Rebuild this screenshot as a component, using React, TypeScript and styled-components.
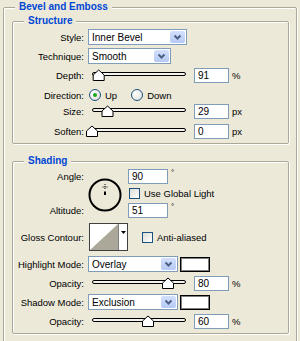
import styled, { createGlobalStyle } from "styled-components";

const GlobalStyle = createGlobalStyle`
  body {
    margin: 0;
    background: #ece9d8;
    font-family: "Liberation Sans", Arial, sans-serif;
    font-size: 9.5px;
    color: #000;
  }
`;

const Panel = styled.div`
  width: 300px;
  height: 341px;
  padding-top: 1px;
  box-sizing: border-box;
  overflow: hidden;
`;

const Group = styled.fieldset<{ $outer?: boolean; $mt?: number }>`
  margin: ${(p) => (p.$outer ? "0 3px" : `${p.$mt ?? 0}px 0 0 0`)};
  padding: ${(p) => (p.$outer ? "2px 7px 16px 8px" : "0 0 4px 0")};
  border: 1px solid #aca899;
  border-radius: 2px;
  box-shadow: 1px 1px 0 #fff, inset 1px 1px 0 #fff;
  min-width: 0;
`;

const Legend = styled.legend<{ $outer?: boolean }>`
  margin-left: ${(p) => (p.$outer ? 3 : 11)}px;
  padding: 0 4px;
  line-height: 12px;
  font-size: 10px;
  font-weight: bold;
  color: #0046d5;
  background: #ece9d8;
`;

const Row = styled.div<{ $h?: number; $mt?: number }>`
  display: flex;
  align-items: center;
  height: ${(p) => p.$h ?? 16}px;
  margin-top: ${(p) => p.$mt ?? 0}px;
`;

const Label = styled.span`
  flex: 0 0 71px;
  margin-right: 4px;
  text-align: right;
  white-space: nowrap;
`;

const SelectBox = styled.div<{ $w: number }>`
  display: flex;
  align-items: center;
  width: ${(p) => p.$w}px;
  height: 16px;
  box-sizing: border-box;
  border: 1px solid #7f9db9;
  background: #fff;
`;

const SelectText = styled.span`
  flex: 1;
  padding-left: 3px;
  font-size: 10px;
`;

const DropButton = styled.span`
  display: flex;
  align-items: center;
  justify-content: center;
  width: 15px;
  height: 12px;
  margin-right: 1px;
  border-radius: 2px;
  background: linear-gradient(#d3e0fd, #b6c9f5);
`;

const NumField = styled.div<{ $w?: number }>`
  display: flex;
  align-items: center;
  width: ${(p) => p.$w ?? 35}px;
  height: 15px;
  box-sizing: border-box;
  padding-left: 3px;
  border: 1px solid #7f9db9;
  background: #fff;
  font-size: 10px;
`;

const Unit = styled.span<{ $top?: boolean }>`
  margin-left: 3px;
  align-self: ${(p) => (p.$top ? "flex-start" : "center")};
  font-size: ${(p) => (p.$top ? 8 : 9.5)}px;
`;

const SliderSvg = styled.svg`
  margin-left: -2px;
  margin-right: 6px;
  flex: 0 0 auto;
`;

const Radio = styled.span<{ $on?: boolean }>`
  display: flex;
  align-items: center;
  justify-content: center;
  width: 12px;
  height: 12px;
  box-sizing: border-box;
  margin-left: 1px;
  border: 1px solid #1c5180;
  border-radius: 50%;
  background: radial-gradient(circle at 35% 35%, #fff, #dcdcd7);
  &::after {
    content: "";
    display: ${(p) => (p.$on ? "block" : "none")};
    width: 4px;
    height: 4px;
    border-radius: 50%;
    background: #21a121;
  }
`;

const Choice = styled.span<{ $mr?: number }>`
  margin-left: 4px;
  margin-right: ${(p) => p.$mr ?? 0}px;
`;

const Check = styled.span<{ $ml?: number }>`
  width: 11px;
  height: 11px;
  box-sizing: border-box;
  margin-left: ${(p) => p.$ml ?? 0}px;
  border: 1px solid #1c5180;
  background: linear-gradient(135deg, #dcdcd7, #fff);
`;

const Swatch = styled.div`
  width: 30px;
  height: 15px;
  box-sizing: border-box;
  margin-left: 2px;
  border: 1px solid #000;
  box-shadow: inset 0 0 0 1px #808080;
  background: #fff;
`;

const AngleGrid = styled.div`
  display: grid;
  grid-template-columns: 75px 40px 1fr;
  grid-template-rows: 16px 16px 16px;
  row-gap: 1px;
  margin-top: 1px;
  align-items: center;
`;

const Cell = styled.div<{ $col: number; $row: number }>`
  grid-column: ${(p) => p.$col};
  grid-row: ${(p) => p.$row};
  display: flex;
  align-items: center;
  height: 100%;
`;

const DialWrap = styled.div`
  grid-column: 2;
  grid-row: 1 / 4;
  align-self: start;
  margin-top: 10px;
  display: flex;
`;

const Contour = styled.svg`
  margin-left: 1px;
`;

function Chevron() {
  return (
    <svg width="9" height="6" viewBox="0 0 9 6">
      <path d="M1.5 1.5 L4.5 4.5 L7.5 1.5" fill="none" stroke="#4d6185" strokeWidth="2" />
    </svg>
  );
}

function Select({ w, value }: { w: number; value: string }) {
  return (
    <SelectBox $w={w}>
      <SelectText>{value}</SelectText>
      <DropButton>
        <Chevron />
      </DropButton>
    </SelectBox>
  );
}

function Slider({ pos }: { pos: number }) {
  return (
    <SliderSvg width="102" height="12" viewBox="0 0 102 12">
      <rect x="6.5" y="3.5" width="93" height="3" rx="1.5" fill="#f4f3ee" stroke="#000" />
      <polygon
        points={`${pos - 5.5},11.5 ${pos - 5.5},6 ${pos},1 ${pos + 5.5},6 ${pos + 5.5},11.5`}
        fill="#fff"
        stroke="#000"
      />
    </SliderSvg>
  );
}

function SliderRow({ label, pos, value, unit, mt }: { label: string; pos: number; value: string; unit: string; mt: number }) {
  return (
    <Row $mt={mt}>
      <Label>{label}</Label>
      <Slider pos={pos} />
      <NumField>{value}</NumField>
      <Unit>{unit}</Unit>
    </Row>
  );
}

function Dial() {
  return (
    <svg width="34" height="34" viewBox="0 0 34 34">
      <circle cx="17" cy="17" r="15.5" fill="none" stroke="#000" strokeWidth="2" />
      <path d="M17 6 V12" stroke="#000" strokeWidth="1" strokeDasharray="1 1" />
      <path d="M14.5 9 H19.5" stroke="#000" strokeWidth="1" strokeDasharray="1 1" />
      <rect x="16" y="13.5" width="2" height="3.5" fill="#000" />
    </svg>
  );
}

function App() {
  return (
    <Panel>
      <GlobalStyle />
      <Group $outer>
        <Legend $outer>Bevel and Emboss</Legend>
        <Group>
          <Legend>Structure</Legend>
          <Row $mt={2}>
            <Label>Style:</Label>
            <Select w={99} value="Inner Bevel" />
          </Row>
          <Row $mt={3}>
            <Label>Technique:</Label>
            <Select w={83} value="Smooth" />
          </Row>
          <SliderRow label="Depth:" pos={12.7} value="91" unit="%" mt={3} />
          <Row $mt={4}>
            <Label>Direction:</Label>
            <Radio $on />
            <Choice $mr={13}>Up</Choice>
            <Radio />
            <Choice>Down</Choice>
          </Row>
          <SliderRow label="Size:" pos={21.5} value="29" unit="px" mt={0} />
          <SliderRow label="Soften:" pos={6} value="0" unit="px" mt={4} />
        </Group>
        <Group $mt={11}>
          <Legend>Shading</Legend>
          <AngleGrid>
            <Cell $col={1} $row={1}>
              <Label>Angle:</Label>
            </Cell>
            <DialWrap>
              <Dial />
            </DialWrap>
            <Cell $col={3} $row={1}>
              <NumField $w={40}>90</NumField>
              <Unit $top>°</Unit>
            </Cell>
            <Cell $col={3} $row={2}>
              <Check $ml={1} />
              <Choice>Use Global Light</Choice>
            </Cell>
            <Cell $col={1} $row={3}>
              <Label>Altitude:</Label>
            </Cell>
            <Cell $col={3} $row={3}>
              <NumField $w={40}>51</NumField>
              <Unit $top>°</Unit>
            </Cell>
          </AngleGrid>
          <Row $h={28} $mt={5}>
            <Label>Gloss Contour:</Label>
            <Contour width="39" height="28" viewBox="0 0 39 28">
              <rect x="0.5" y="0.5" width="38" height="27" fill="#fff" stroke="#404040" />
              <polygon points="1,27 29,1 29,27" fill="#aca899" />
              <path d="M29.5 1 V27" stroke="#808080" />
              <polygon points="32,8 37,8 34.5,11" fill="#000" />
            </Contour>
            <Check $ml={14} />
            <Choice>Anti-aliased</Choice>
          </Row>
          <Row $mt={5}>
            <Label>Highlight Mode:</Label>
            <Select w={90} value="Overlay" />
            <Swatch />
          </Row>
          <SliderRow label="Opacity:" pos={82} value="80" unit="%" mt={3} />
          <Row $mt={3}>
            <Label>Shadow Mode:</Label>
            <Select w={90} value="Exclusion" />
            <Swatch />
          </Row>
          <SliderRow label="Opacity:" pos={62} value="60" unit="%" mt={3} />
        </Group>
      </Group>
    </Panel>
  );
}

export default App;
